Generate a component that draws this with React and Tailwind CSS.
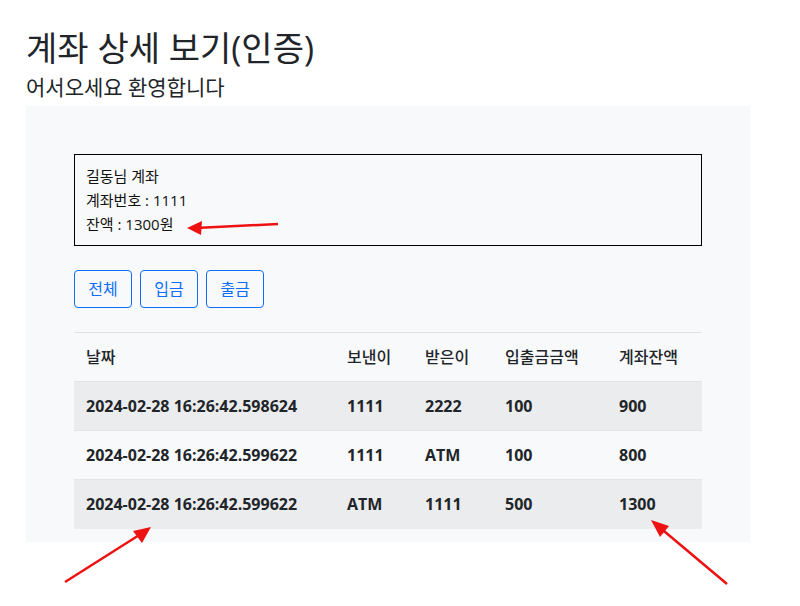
export default function App() {
  const rows = [
    ["2024-02-28 16:26:42.598624", "1111", "2222", "100", "900"],
    ["2024-02-28 16:26:42.599622", "1111", "ATM", "100", "800"],
    ["2024-02-28 16:26:42.599622", "ATM", "1111", "500", "1300"],
  ];
  const font = { fontFamily: "'Open Sans', 'Noto Sans CJK KR', sans-serif" };
  return (
    <div className="relative w-[800px] h-[606px] bg-white text-[#212529]" style={font}>
      <div className="pl-[26px] pt-[26px]">
        <h1 className="text-[34px] leading-[44px] font-normal">계좌 상세 보기(인증)</h1>
        <p className="text-[21px] leading-[28px] mt-[3px]">어서오세요 환영합니다</p>
      </div>
      <div className="ml-[26px] w-[724px] mt-[5px] bg-[#f8f9fa] px-[48px] pt-[48px] pb-[13px]">
        <div className="border border-black px-[11px] py-[9px] text-[15px] leading-[24px] text-[#111]">
          <div>길동님 계좌</div>
          <div>계좌번호 : 1111</div>
          <div>잔액 : 1300원</div>
        </div>
        <div className="flex gap-[8px] mt-[24px]">
          {["전체", "입금", "출금"].map((t) => (
            <button key={t} className="w-[58px] h-[38px] border border-[#0d6efd] rounded-[4px] text-[#0d6efd] text-[16px]">
              {t}
            </button>
          ))}
        </div>
        <table className="w-full mt-[24px] border-t border-[#dee2e6] border-collapse text-[16px]">
          <thead>
            <tr className="h-[49px]">
              <th className="text-left font-medium pl-[12px] w-[261px]">날짜</th>
              <th className="text-left font-medium pl-[12px] w-[78px]">보낸이</th>
              <th className="text-left font-medium pl-[12px] w-[80px]">받은이</th>
              <th className="text-left font-medium pl-[12px] w-[114px]">입출금금액</th>
              <th className="text-left font-medium pl-[12px]">계좌잔액</th>
            </tr>
          </thead>
          <tbody>
            {rows.map((r, i) => (
              <tr key={i} className={`h-[49px] border-t border-[#e3e5e8] ${i % 2 === 0 ? "bg-[#ebeced]" : "bg-[#f8f9fa]"}`}>
                {r.map((c, j) => (
                  <td key={j} className="pl-[12px] font-bold">{c}</td>
                ))}
              </tr>
            ))}
          </tbody>
        </table>
      </div>
      <svg className="absolute inset-0 pointer-events-none" width="800" height="606">
        <line x1="278" y1="224" x2="196" y2="228" stroke="#ee1111" strokeWidth="2.5" />
        <path d="M187,228 L202,221 L201,235 Z" fill="#ee1111" />
        <line x1="65" y1="582" x2="144" y2="532" stroke="#ee1111" strokeWidth="2.5" />
        <path d="M151,527 L133,531 L142,543 Z" fill="#ee1111" />
        <line x1="727" y1="584" x2="658" y2="526" stroke="#ee1111" strokeWidth="2.5" />
        <path d="M651,520 L669,526 L660,537 Z" fill="#ee1111" />
      </svg>
    </div>
  );
}
